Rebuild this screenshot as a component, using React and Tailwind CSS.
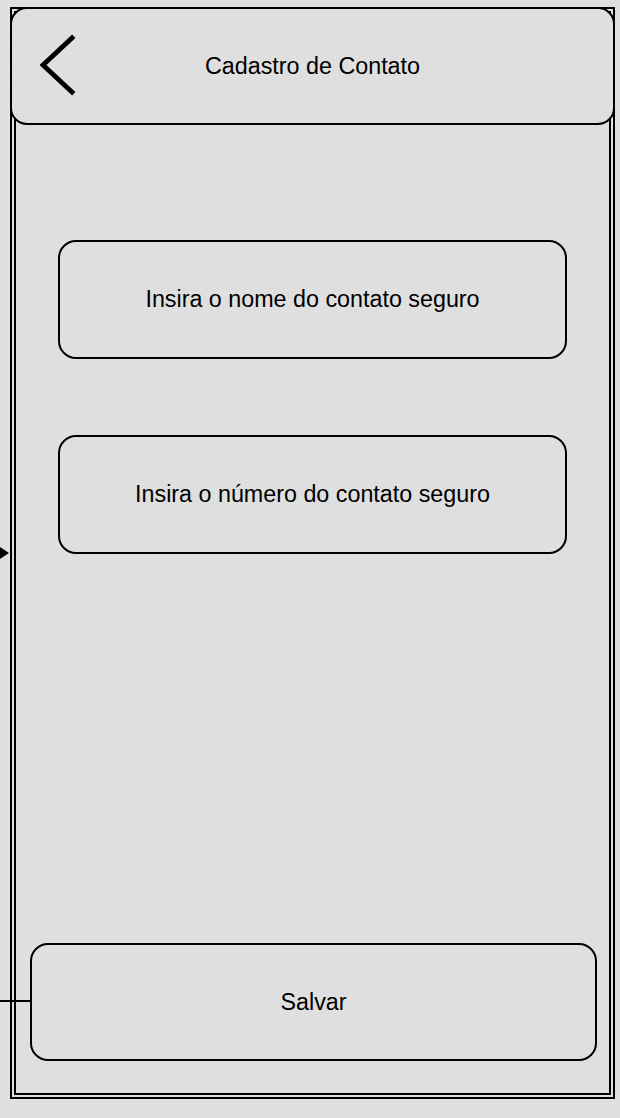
import React from "react";

function Field({ children, className = "" }) {
  return (
    <div
      className={
        "flex items-center justify-center rounded-[18px] border-2 border-black bg-[#dfdfdf] text-[23.3px] text-black " +
        className
      }
    >
      {children}
    </div>
  );
}

export default function App() {
  return (
    <div
      className="relative w-[620px] h-[1118px] overflow-hidden bg-[#dfdfdf] bg-[linear-gradient(to_right,#e3e3e3_1px,transparent_1px),linear-gradient(to_bottom,#e3e3e3_1px,transparent_1px)] bg-[size:19.5px_19.5px] bg-[position:8px_7px] pt-[7px] pl-[10px]"
      style={{ fontFamily: '"Liberation Sans", Arial, sans-serif' }}
    >
      {/* outer frame */}
      <div className="w-[605px] h-[1092px] border-2 border-black p-[2px] bg-[#dfdfdf]">
        {/* inner frame */}
        <div className="flex h-full flex-col border-2 border-black">
          {/* header */}
          <div className="-mx-[6px] -mt-[6px] grid h-[118px] grid-cols-[1fr_auto_1fr] items-center rounded-[17px] border-2 border-black bg-[#dfdfdf]">
            <div className="flex items-center pl-[28px]">
              <svg width="40" height="64" viewBox="0 0 40 64" fill="none">
                <polyline
                  points="32,4 3,31 32,58"
                  stroke="#000"
                  strokeWidth="4.8"
                  strokeLinecap="square"
                  strokeLinejoin="miter"
                />
              </svg>
            </div>
            <div className="pt-[1px] text-[23.3px] text-black">Cadastro de Contato</div>
            <div />
          </div>

          <Field className="ml-[42px] mt-[115px] h-[119px] w-[509px]">
            Insira o nome do contato seguro
          </Field>
          <Field className="ml-[42px] mt-[76px] h-[119px] w-[509px]">
            Insira o número do contato seguro
          </Field>

          <Field className="mt-auto mb-[32px] ml-[14px] h-[118px] w-[567px]">
            Salvar
          </Field>
        </div>
      </div>

      {/* connector arrow head at left */}
      <svg
        className="absolute left-0 top-[546px]"
        width="10"
        height="14"
        viewBox="0 0 10 14"
      >
        <polygon points="0,1 9,7 0,13" fill="#000" />
      </svg>
      {/* connector line to save button */}
      <div className="absolute left-0 top-[1000px] h-[2px] w-[31px] bg-black" />
    </div>
  );
}
